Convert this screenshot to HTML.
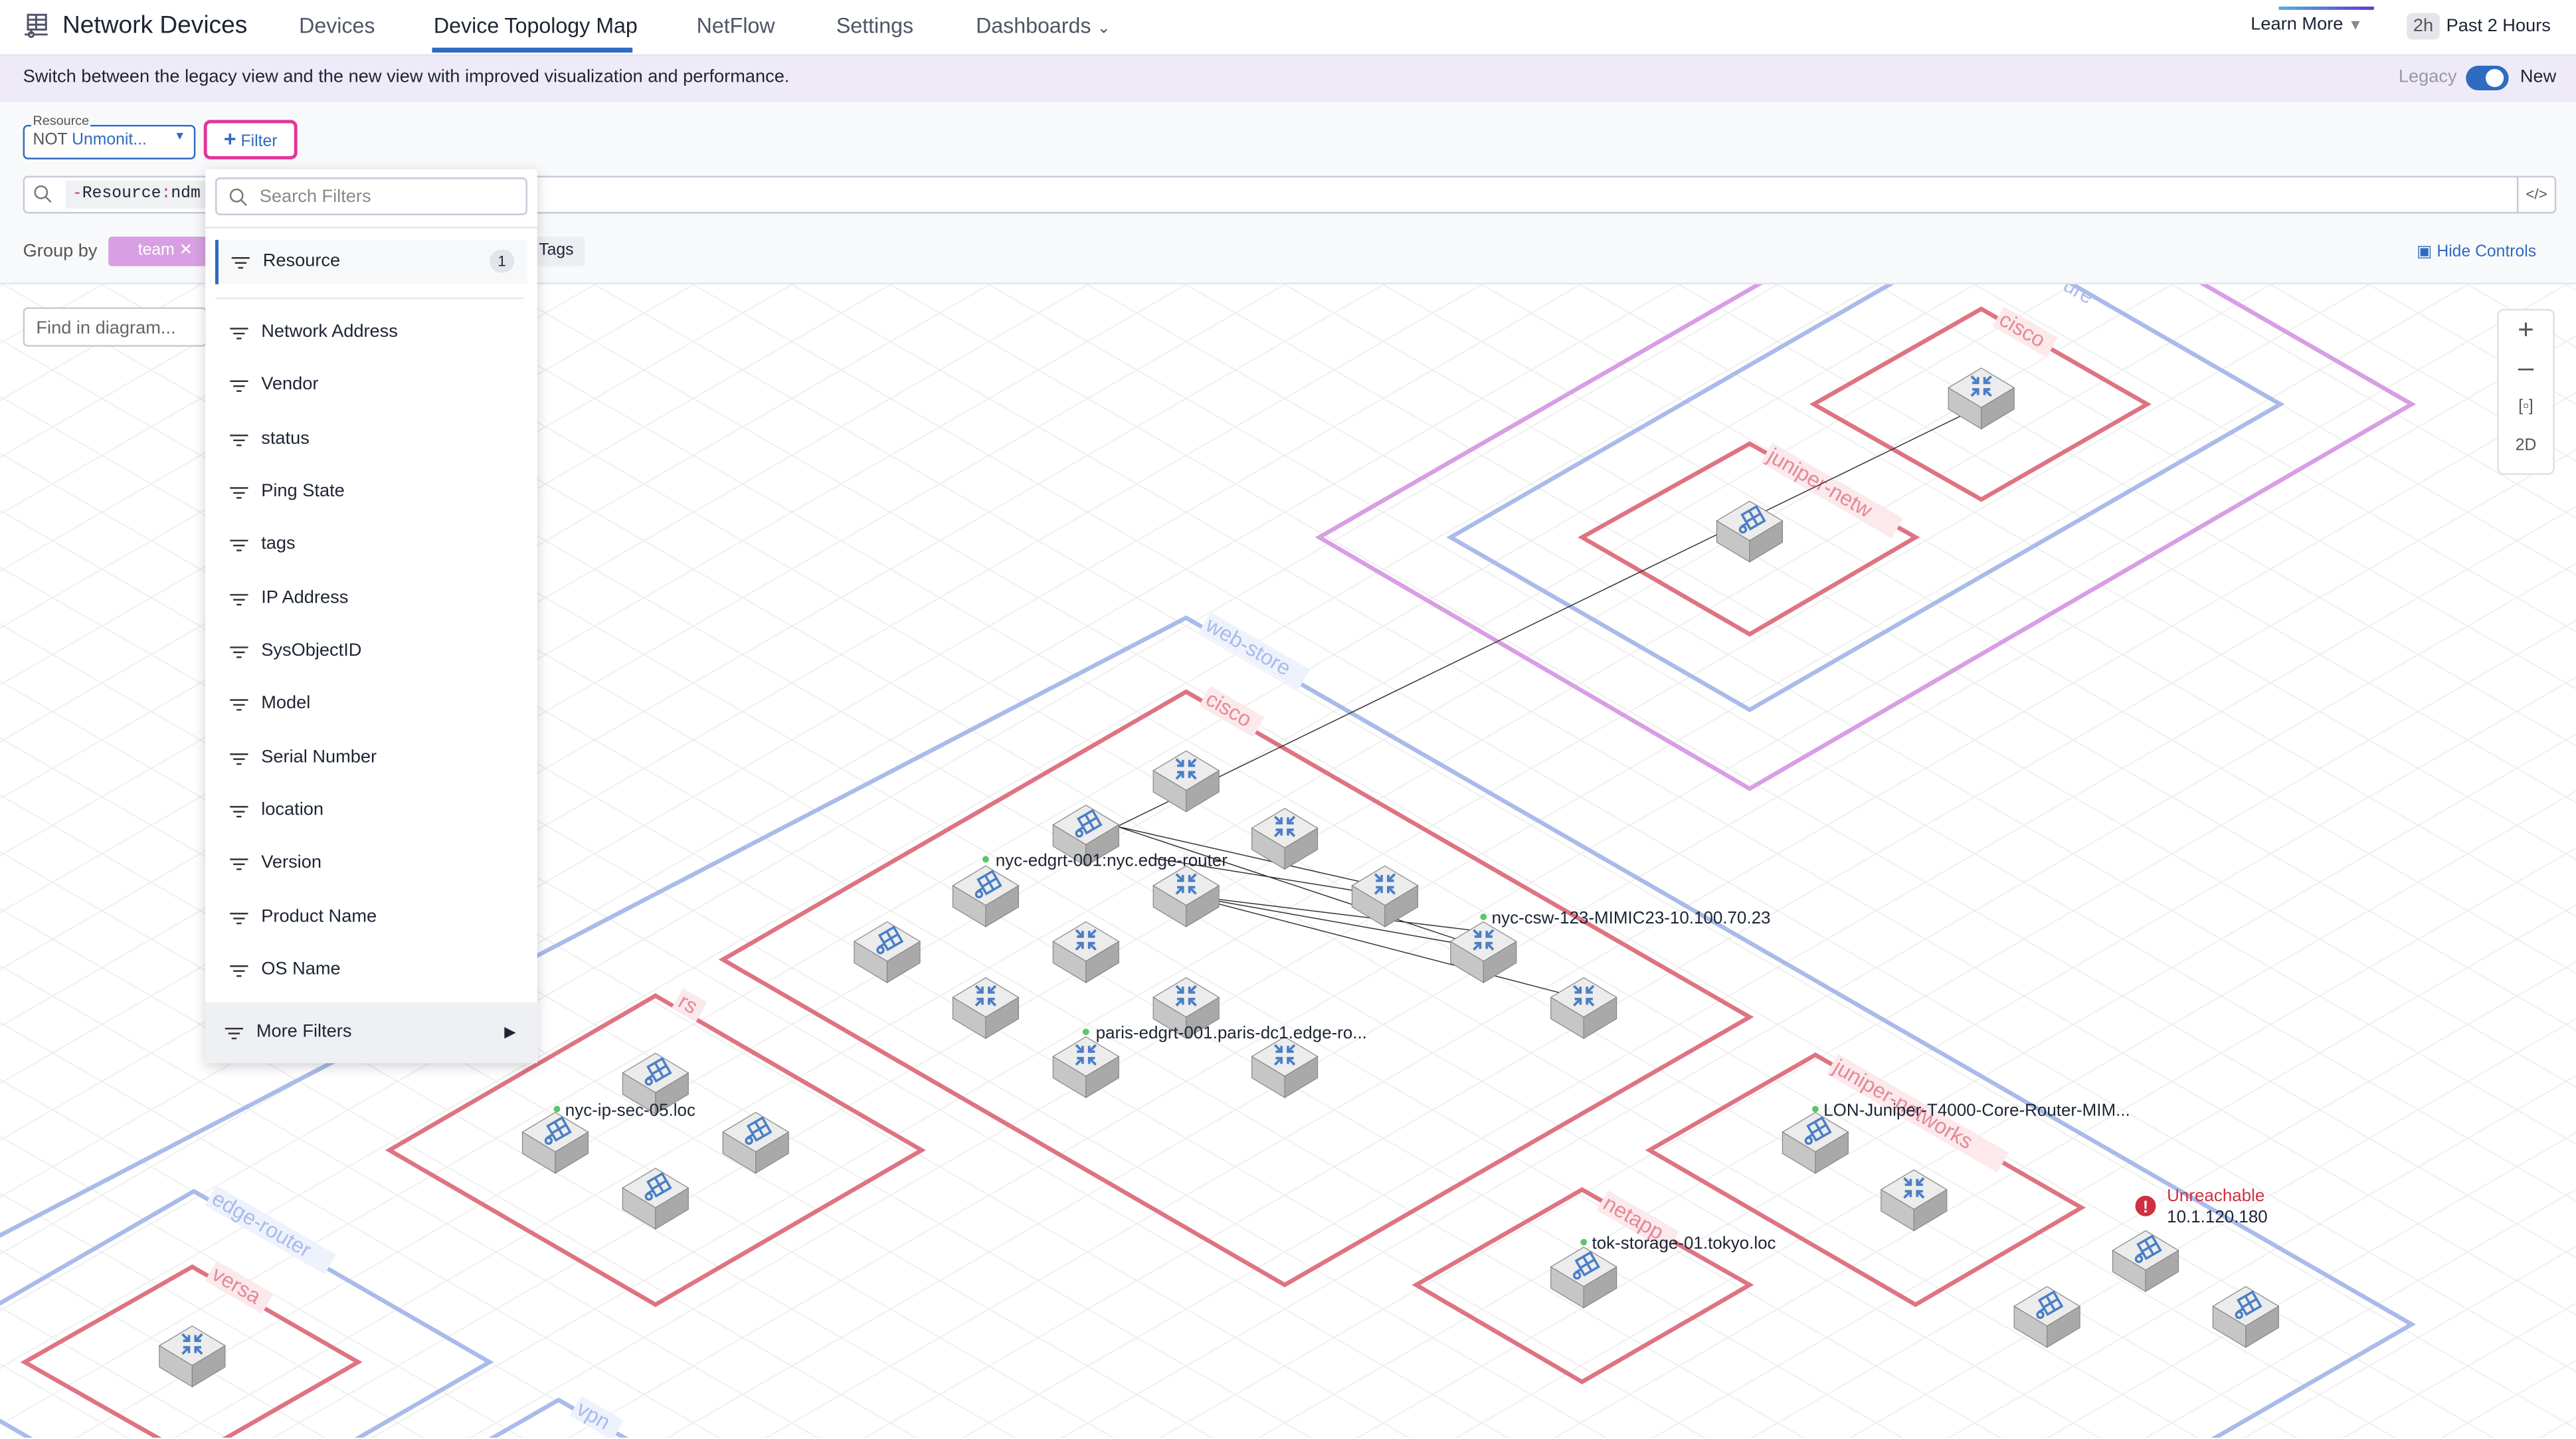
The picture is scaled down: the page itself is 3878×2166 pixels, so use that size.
<!DOCTYPE html>
<html><head><meta charset="utf-8"><style>
html,body{margin:0;padding:0;width:3878px;height:2166px;overflow:hidden;background:#fff}
#w{width:1568px;height:875px;transform:scale(2.47321);transform-origin:0 0;position:relative;font-family:"Liberation Sans",sans-serif;color:#1d2433;overflow:hidden;background:#f8f9fb}
.a{position:absolute}
.hdr{left:0;top:0;width:1568px;height:33px;background:#fff;border-bottom:1px solid #e2e5ec}
.tab{top:8px;font-size:13px;color:#4e5566}
.banner{left:0;top:34px;width:1568px;height:28px;background:#efeaf8;font-size:11px}
.dd{left:125px;top:103px;width:202px;height:544px;background:#fff;box-shadow:0 2px 8px rgba(0,0,0,.18);border-radius:2px}
.it{position:absolute;left:34px;font-size:11px;color:#1d2433;white-space:nowrap}
</style></head><body><div id="w">
<svg class="a" style="left:0;top:173px" width="1568" height="702" viewBox="0 173 1568 702">
<defs>
<pattern id="g" width="60" height="34.64" patternUnits="userSpaceOnUse" x="2" y="0">
<path d="M0 0L60 34.64M0 34.64L60 0" stroke="#efefef" stroke-width="0.8" fill="none"/>
</pattern>
<g id="cb"><polygon points="0,-13 20,-1 0,11 -20,-1" fill="#ececec" stroke="#888" stroke-width=".5"/><polygon points="-20,-1 0,11 0,24 -20,12" fill="#c6c6c6" stroke="#888" stroke-width=".5"/><polygon points="20,-1 0,11 0,24 20,12" fill="#a9a9a9" stroke="#888" stroke-width=".5"/></g>
<g id="rt"><use href="#cb"/><path d="M-6,-7l4,4m0,-3.5v3.5h-3.5M6,-7l-4,4m0,-3.5v3.5h3.5M-6,5l4,-4m0,3.5v-3.5h-3.5M6,5l-4,-4m0,3.5v-3.5h3.5" stroke="#4a7ec6" stroke-width="1.5" fill="none" transform="translate(0,-1)"/></g>
<g id="fw"><use href="#cb"/><g transform="translate(1,-1) rotate(-30)" stroke="#4a7ec6" stroke-width="1.4" fill="none"><rect x="-3" y="-6" width="10" height="10"/><path d="M-3,-1h10M2,-6v10M-3,0h-4"/><circle cx="-7" cy="2" r="1.8"/></g></g>
</defs>
<rect x="0" y="173" width="1568" height="703" fill="#fff"/>
<rect x="0" y="173" width="1568" height="703" fill="url(#g)"/>
<g fill="none" stroke-width="2.6">
<polygon points="1206,95 1468,246 1065,480 803,327" stroke="#d89ee4"/>
<polygon points="1206,141 1388,246 1065,432 883,327" stroke="#a9bbea"/>
<polygon points="722,376 1468,806 1000,1076 -300,908" stroke="#a9bbea"/>
<polygon points="118,725 298,829 118,933 -62,829" stroke="#a9bbea"/>
<polygon points="340,852 500,944 340,1036 180,944" stroke="#a9bbea"/>
<polygon points="1206,188 1307,246 1206,304 1104,246" stroke="#de7382"/>
<polygon points="1065,270 1166,327 1065,386 963,327" stroke="#de7382"/>
<polygon points="722,421 1065,619 782,782 440,584" stroke="#de7382"/>
<polygon points="399,606 561,700 399,794 237,700" stroke="#de7382"/>
<polygon points="1105,642 1267,735 1166,794 1004,700" stroke="#de7382"/>
<polygon points="963,724 1065,782 963,841 862,782" stroke="#de7382"/>
<polygon points="117,771 218,829 117,887 15,829" stroke="#de7382"/>
</g>
<g font-size="13" font-family="Liberation Sans,sans-serif">
<g fill="#e38a98">
<g transform="translate(1216,197) rotate(30)"><rect x="-2" y="-11" width="38" height="14" fill="#fbe9ec"/><text>cisco</text></g>
<g transform="translate(1075,280) rotate(30)"><rect x="-2" y="-11" width="92" height="14" fill="#fbe9ec"/><text>juniper-netw</text></g>
<g transform="translate(733,428) rotate(30)"><rect x="-2" y="-11" width="38" height="14" fill="#fbe9ec"/><text>cisco</text></g>
<g transform="translate(412,612) rotate(30)"><rect x="-2" y="-11" width="17" height="14" fill="#fbe9ec"/><text>rs</text></g>
<g transform="translate(1115,652) rotate(30)"><rect x="-2" y="-11" width="120" height="14" fill="#fbe9ec"/><text>juniper-networks</text></g>
<g transform="translate(975,735) rotate(30)"><rect x="-2" y="-11" width="50" height="14" fill="#fbe9ec"/><text>netapp</text></g>
<g transform="translate(128,778) rotate(30)"><rect x="-2" y="-11" width="40" height="14" fill="#fbe9ec"/><text>versa</text></g>
</g>
<g fill="#a9bbea">
<g transform="translate(733,383) rotate(30)"><rect x="-2" y="-11" width="70" height="14" fill="#eef2fc"/><text>web-store</text></g>
<g transform="translate(1255,176) rotate(30)"><text>ure</text></g>
<g transform="translate(128,732) rotate(30)"><rect x="-2" y="-11" width="84" height="14" fill="#eef2fc"/><text>edge-router</text></g>
<g transform="translate(350,860) rotate(30)"><rect x="-2" y="-11" width="30" height="14" fill="#eef2fc"/><text>vpn</text></g>
</g>
</g>
<g stroke="#333" stroke-width=".6" fill="none">
<path d="M1200,250L680,503M680,503L843,540M680,503L903,577M722,545L903,577M722,545L964,608M700,522L843,545M722,545L903,567"/>
</g>
<g>
<use href="#rt" x="1206" y="237"/><use href="#fw" x="1065" y="318"/><use href="#rt" x="722" y="470"/><use href="#fw" x="661" y="503"/><use href="#rt" x="782" y="505"/><use href="#fw" x="600" y="540"/><use href="#rt" x="722" y="540"/><use href="#rt" x="843" y="540"/><use href="#fw" x="540" y="574"/><use href="#rt" x="661" y="574"/><use href="#rt" x="903" y="574"/><use href="#rt" x="600" y="608"/><use href="#rt" x="722" y="608"/><use href="#rt" x="964" y="608"/><use href="#rt" x="661" y="644"/><use href="#rt" x="782" y="644"/><use href="#fw" x="399" y="654"/><use href="#fw" x="338" y="690"/><use href="#fw" x="460" y="690"/><use href="#fw" x="399" y="724"/><use href="#fw" x="1105" y="690"/><use href="#rt" x="1165" y="725"/><use href="#fw" x="964" y="772"/><use href="#fw" x="1306" y="762"/><use href="#fw" x="1246" y="796"/><use href="#fw" x="1367" y="796"/><use href="#rt" x="117" y="820"/>
</g>
<g font-size="10.5" font-family="Liberation Sans,sans-serif" fill="#1d2433">
<circle cx="600" cy="523" r="2" fill="#5cc66a"/><text x="606" y="527">nyc-edgrt-001:nyc.edge-router</text>
<circle cx="903" cy="558" r="2" fill="#5cc66a"/><text x="908" y="562">nyc-csw-123-MIMIC23-10.100.70.23</text>
<circle cx="661" cy="628" r="2" fill="#5cc66a"/><text x="667" y="632">paris-edgrt-001.paris-dc1.edge-ro...</text>
<circle cx="339" cy="675" r="2" fill="#5cc66a"/><text x="344" y="679">nyc-ip-sec-05.loc</text>
<circle cx="1105" cy="675" r="2" fill="#5cc66a"/><text x="1110" y="679">LON-Juniper-T4000-Core-Router-MIM...</text>
<circle cx="964" cy="756" r="2" fill="#5cc66a"/><text x="969" y="760">tok-storage-01.tokyo.loc</text>
<text x="1319" y="731" fill="#d0303f">Unreachable</text><text x="1319" y="744">10.1.120.180</text>
<circle cx="1306" cy="734" r="7" fill="#d0303f" stroke="#fff" stroke-width="1.5"/><text x="1306" y="738" fill="#fff" font-size="10" text-anchor="middle" font-weight="bold">!</text>
</g>
</svg>
<div class="a hdr"></div>
<svg class="a" style="left:14px;top:8px" width="16" height="16" viewBox="0 0 16 16" fill="none" stroke="#4e5566" stroke-width="1.2"><rect x="3" y="1" width="11" height="9"/><path d="M3 4h11M3 7h11M8 1v9M5 10v3M1 13h3M7 13h8"/><circle cx="5" cy="13" r="1.5"/></svg>
<div class="a" style="left:38px;top:7px;font-size:15px;color:#1d2433">Network Devices</div>
<div class="a tab" style="left:182px">Devices</div>
<div class="a tab" style="left:264px;color:#1d2433">Device Topology Map</div>
<div class="a" style="left:263px;top:29px;width:122px;height:3px;background:#2f6bc0"></div>
<div class="a tab" style="left:424px">NetFlow</div>
<div class="a tab" style="left:509px">Settings</div>
<div class="a tab" style="left:594px">Dashboards <span style="font-size:10px">&#8964;</span></div>
<div class="a" style="left:1387px;top:4px;width:58px;height:2px;background:linear-gradient(90deg,#4fb0e0,#5b3ad0)"></div>
<div class="a" style="left:1370px;top:9px;font-size:11px">Learn More <span style="color:#888;font-size:9px">&#9660;</span></div>
<div class="a" style="left:1465px;top:8px;width:20px;height:16px;background:#e3e5ea;border-radius:3px;font-size:11px;text-align:center;line-height:16px;color:#555">2h</div>
<div class="a" style="left:1489px;top:10px;font-size:11px">Past 2 Hours</div>
<div class="a banner"><span class="a" style="left:14px;top:7px">Switch between the legacy view and the new view with improved visualization and performance.</span>
<span class="a" style="left:1460px;top:7px;color:#999">Legacy</span>
<span class="a" style="left:1501px;top:6px;width:26px;height:15px;background:#2f6bc0;border-radius:8px"><span class="a" style="left:12px;top:2px;width:11px;height:11px;background:#fff;border-radius:50%"></span></span>
<span class="a" style="left:1534px;top:7px">New</span></div>
<div class="a" style="left:14px;top:76px;width:103px;height:19px;border:1px solid #2f6bc0;border-radius:3px;background:#fff"></div>
<div class="a" style="left:19px;top:69px;font-size:8px;background:#f8f9fb;color:#555;padding:0 1px">Resource</div>
<div class="a" style="left:20px;top:80px;font-size:10px;color:#555">NOT <span style="color:#2f6bc0">Unmonit...</span></div>
<div class="a" style="left:106px;top:80px;font-size:7px;color:#2f6bc0">&#9660;</div>
<div class="a" style="left:124px;top:73px;border:2px solid #e3359a;border-radius:4px;background:#fff;font-size:10px;color:#2f6bc0;line-height:20px;text-align:center;box-sizing:border-box;width:57px;height:24px"><b style="font-size:13px">+</b> Filter</div>
<div class="a" style="left:14px;top:107px;width:1518px;height:21px;border:1px solid #c7cad8;border-radius:3px;background:#fff"></div>
<div class="a" style="left:1532px;top:107px;width:22px;height:21px;border:1px solid #c7cad8;border-radius:0 3px 3px 0;background:#fff;font-size:9px;text-align:center;line-height:21px;color:#555">&lt;/&gt;</div>
<svg class="a" style="left:20px;top:112px" width="12" height="12" viewBox="0 0 12 12" fill="none" stroke="#777"><circle cx="5" cy="5" r="3.7"/><path d="M7.7 7.7L11 11"/></svg>
<div class="a" style="left:40px;top:110px;width:90px;height:17px;background:#f0f1f3;font-family:'Liberation Mono',monospace;font-size:10px;line-height:17px;padding-left:4px"><span style="color:#c0309a">-</span>Resource<span style="color:#c0309a">:</span>ndm</div>
<div class="a" style="left:14px;top:147px;font-size:11px;color:#555">Group by</div>
<div class="a" style="left:66px;top:144px;width:62px;height:18px;background:#d8a0e2;border-radius:2px;color:#fff;font-size:10px;line-height:18px;padding-left:18px;box-sizing:border-box">team &#10005;</div>
<div class="a" style="left:322px;top:144px;width:34px;height:18px;background:#eceef2;border-radius:2px;font-size:10px;line-height:18px;padding-left:6px;box-sizing:border-box">Tags</div>
<div class="a" style="left:1471px;top:148px;font-size:10px;color:#2f6bc0">&#9635; Hide Controls</div>
<div class="a" style="left:0;top:172px;width:1568px;height:1px;background:#e2e5ec"></div>
<div class="a" style="left:14px;top:187px;width:112px;height:24px;border:1px solid #c7cad8;border-radius:3px;background:#fff;font-size:11px;color:#666;line-height:24px;padding-left:7px;box-sizing:border-box">Find in diagram...</div>
<div class="a" style="left:1520px;top:188px;width:33px;height:99px;border:1px solid #dde0e6;border-radius:4px;background:#fff;color:#555;text-align:center">
<div style="font-size:17px;line-height:22px;margin-top:1px">+</div><div style="font-size:17px;line-height:24px">&#8211;</div><div style="font-size:10px;line-height:24px">[&#9643;]</div><div style="font-size:10px;line-height:24px">2D</div></div>
<div class="a dd">
<div class="a" style="left:6px;top:5px;width:188px;height:21px;border:1px solid #c7cad8;border-radius:3px"></div>
<svg class="a" style="left:14px;top:11px" width="12" height="12" viewBox="0 0 12 12" fill="none" stroke="#777"><circle cx="5" cy="5" r="3.7"/><path d="M7.7 7.7L11 11"/></svg>
<div class="a" style="left:33px;top:11px;font-size:11px;color:#888">Search Filters</div>
<div class="a" style="left:0;top:35px;width:202px;height:1px;background:#e2e5ec"></div>
<div class="a" style="left:6px;top:43px;width:188px;height:27px;background:#f7f8fa;border-left:2px solid #2f6bc0"></div>
<div class="a" style="left:173px;top:49px;width:15px;height:14px;background:#e3e5ea;border-radius:7px;font-size:9px;text-align:center;line-height:14px">1</div>
<div class="a" style="left:6px;top:78px;width:188px;height:1px;background:#e8eaee"></div>
<div class="a" style="left:0;top:507px;width:202px;height:37px;background:#eef0f3"></div>
<div class="a" style="left:182px;top:520px;font-size:9px">&#9654;</div>
<div style="position:absolute;left:0;top:0;width:202px;font-size:11px">
<div class="it" style="top:50px;left:35px">Resource</div>
<div class="it" style="top:93px">Network Address</div>
<div class="it" style="top:125px">Vendor</div>
<div class="it" style="top:158px">status</div>
<div class="it" style="top:190px">Ping State</div>
<div class="it" style="top:222px">tags</div>
<div class="it" style="top:255px">IP Address</div>
<div class="it" style="top:287px">SysObjectID</div>
<div class="it" style="top:319px">Model</div>
<div class="it" style="top:352px">Serial Number</div>
<div class="it" style="top:384px">location</div>
<div class="it" style="top:416px">Version</div>
<div class="it" style="top:449px">Product Name</div>
<div class="it" style="top:481px">OS Name</div>
<div class="it" style="top:519px;left:31px">More Filters</div>
</div>
<svg class="a" style="left:0;top:0" width="202" height="544"><g stroke="#333" stroke-width="1">
<path d="M16 54h11M18 57h7M20 60h3"/>
<path d="M15 97h11M17 100h7M19 103h3"/><path d="M15 129h11M17 132h7M19 135h3"/><path d="M15 162h11M17 165h7M19 168h3"/><path d="M15 194h11M17 197h7M19 200h3"/><path d="M15 226h11M17 229h7M19 232h3"/><path d="M15 259h11M17 262h7M19 265h3"/><path d="M15 291h11M17 294h7M19 297h3"/><path d="M15 323h11M17 326h7M19 329h3"/><path d="M15 356h11M17 359h7M19 362h3"/><path d="M15 388h11M17 391h7M19 394h3"/><path d="M15 420h11M17 423h7M19 426h3"/><path d="M15 453h11M17 456h7M19 459h3"/><path d="M15 485h11M17 488h7M19 491h3"/><path d="M12 523h11M14 526h7M16 529h3"/>
</g></svg>
</div>
</div></body></html>
